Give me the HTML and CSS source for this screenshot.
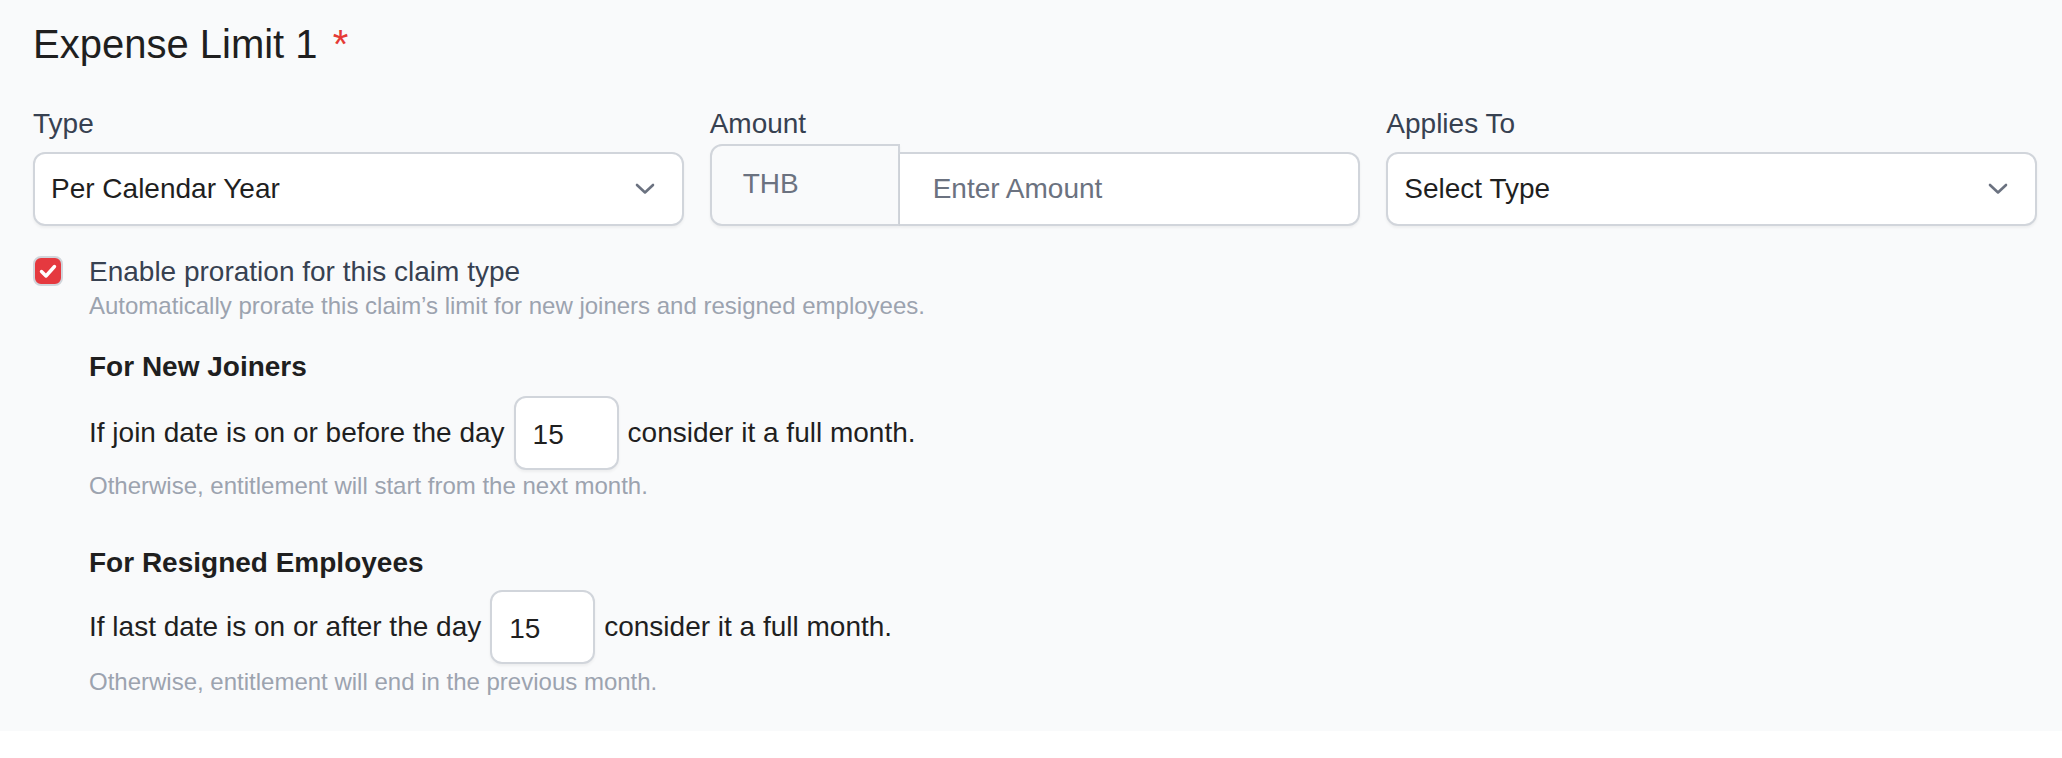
FILE: index.html
```html
<!DOCTYPE html>
<html lang="en">
<head>
<meta charset="utf-8">
<title>Expense Limit</title>
<link rel="stylesheet" href="styles.css">
</head>
<body>
<section class="panel">
  <h2 class="title">Expense Limit 1 <span class="req">*</span></h2>

  <div class="fields">
    <div class="field">
      <label class="label">Type</label>
      <div class="select">
        <span class="select-text">Per Calendar Year</span>
        <svg class="chev" viewBox="0 0 20 12" width="20" height="12"><path d="M2 2 L10 9.5 L18 2" fill="none" stroke="#6b7280" stroke-width="2.6" stroke-linecap="round" stroke-linejoin="round"/></svg>
      </div>
    </div>
    <div class="field">
      <label class="label">Amount</label>
      <div class="amount">
        <span class="addon">THB</span>
        <div class="amount-input"><span class="placeholder">Enter Amount</span></div>
      </div>
    </div>
    <div class="field">
      <label class="label">Applies To</label>
      <div class="select">
        <span class="select-text">Select Type</span>
        <svg class="chev" viewBox="0 0 20 12" width="20" height="12"><path d="M2 2 L10 9.5 L18 2" fill="none" stroke="#6b7280" stroke-width="2.6" stroke-linecap="round" stroke-linejoin="round"/></svg>
      </div>
    </div>
  </div>

  <div class="proration">
    <span class="checkbox">
      <svg viewBox="0 0 26 26" width="26" height="26"><path d="M6.5 13.5 L11 18 L19.5 8.5" fill="none" stroke="#ffffff" stroke-width="3.4" stroke-linecap="round" stroke-linejoin="round"/></svg>
    </span>
    <div class="proration-body">
      <div class="check-label">Enable proration for this claim type</div>
      <div class="hint hint-top">Automatically prorate this claim’s limit for new joiners and resigned employees.</div>

      <div class="rule rule-join">
        <div class="rule-title">For New Joiners</div>
        <div class="rule-row">
          <span>If join date is on or before the day</span>
          <span class="day-box">15</span>
          <span>consider it a full month.</span>
        </div>
        <div class="hint">Otherwise, entitlement will start from the next month.</div>
      </div>

      <div class="rule rule-resign">
        <div class="rule-title">For Resigned Employees</div>
        <div class="rule-row row-resign">
          <span>If last date is on or after the day</span>
          <span class="day-box">15</span>
          <span>consider it a full month.</span>
        </div>
        <div class="hint hint-end">Otherwise, entitlement will end in the previous month.</div>
      </div>
    </div>
  </div>
</section>
</body>
</html>
```

FILE: styles.css
```css
* { box-sizing: border-box; }

html, body {
  margin: 0;
  padding: 0;
  background: #ffffff;
  font-family: "Liberation Sans", Arial, Helvetica, sans-serif;
}

.panel {
  background: #f9fafb;
  padding: 16px 25px 33px 33px;
}

.title {
  margin: 0 0 32px 0;
  font-size: 40px;
  line-height: 56px;
  font-weight: 400;
  color: #1f1f1f;
}

.req {
  color: #e53935;
  margin-left: 4px;
}

.fields {
  display: grid;
  grid-template-columns: 1fr 1fr 1fr;
  column-gap: 26px;
}

.field {
  display: flex;
  flex-direction: column;
}

.label {
  font-size: 28px;
  line-height: 40px;
  color: #374151;
}

.select {
  margin-top: 8px;
  height: 74px;
  background: #ffffff;
  border: 2px solid #d1d5db;
  border-radius: 12px;
  box-shadow: 0 2px 3px rgba(0, 0, 0, 0.05);
  display: flex;
  align-items: center;
  justify-content: space-between;
  padding: 0 27px 0 16px;
}

.select-text {
  font-size: 28px;
  color: #1f1f1f;
}

.chev {
  display: block;
}

.amount {
  display: flex;
  align-items: flex-end;
}

.addon {
  width: 190px;
  height: 82px;
  flex: none;
  display: flex;
  align-items: center;
  padding-left: 31px;
  padding-bottom: 2px;
  font-size: 28px;
  color: #6b7280;
  background: #f9fafb;
  border: 2px solid #d1d5db;
  border-right: 2px solid #d1d5db;
  border-radius: 12px 0 0 12px;
  box-shadow: 0 2px 3px rgba(0, 0, 0, 0.05);
}

.amount-input {
  flex: 1;
  height: 74px;
  background: #ffffff;
  border: 2px solid #d1d5db;
  border-left: none;
  border-radius: 0 12px 12px 0;
  box-shadow: 0 2px 3px rgba(0, 0, 0, 0.05);
  display: flex;
  align-items: center;
  padding-left: 33px;
}

.placeholder {
  font-size: 28px;
  color: #6b7280;
}

.proration {
  margin-top: 28px;
  display: flex;
  align-items: flex-start;
  gap: 26px;
}

.checkbox {
  flex: none;
  width: 30px;
  height: 30px;
  margin-top: 2px;
  border: 2px solid #d1d5db;
  border-radius: 8px;
  background: #e5393f;
  display: flex;
  align-items: center;
  justify-content: center;
}

.checkbox svg {
  display: block;
  border-radius: 6px;
}

.proration-body {
  flex: 1;
}

.check-label {
  font-size: 28px;
  line-height: 36px;
  color: #374151;
}

.hint {
  font-size: 24px;
  line-height: 32px;
  color: #9ca3af;
}

.rule-join {
  margin-top: 25px;
}

.rule-resign {
  margin-top: 41px;
}

.rule-title {
  font-size: 28px;
  line-height: 40px;
  font-weight: 700;
  color: #1f1f1f;
}

.rule-row {
  margin-top: 9px;
  display: flex;
  align-items: center;
  gap: 9px;
  font-size: 28px;
  line-height: 40px;
  color: #1f1f1f;
}

.row-resign {
  margin-top: 7px;
}

.day-box {
  width: 105px;
  height: 74px;
  background: #ffffff;
  border: 2px solid #d1d5db;
  border-radius: 12px;
  box-shadow: 0 2px 3px rgba(0, 0, 0, 0.05);
  display: flex;
  align-items: center;
  padding: 4px 0 0 17px;
  font-size: 28px;
  color: #1f1f1f;
}

.hint-end {
  margin-top: 2px;
}
```
